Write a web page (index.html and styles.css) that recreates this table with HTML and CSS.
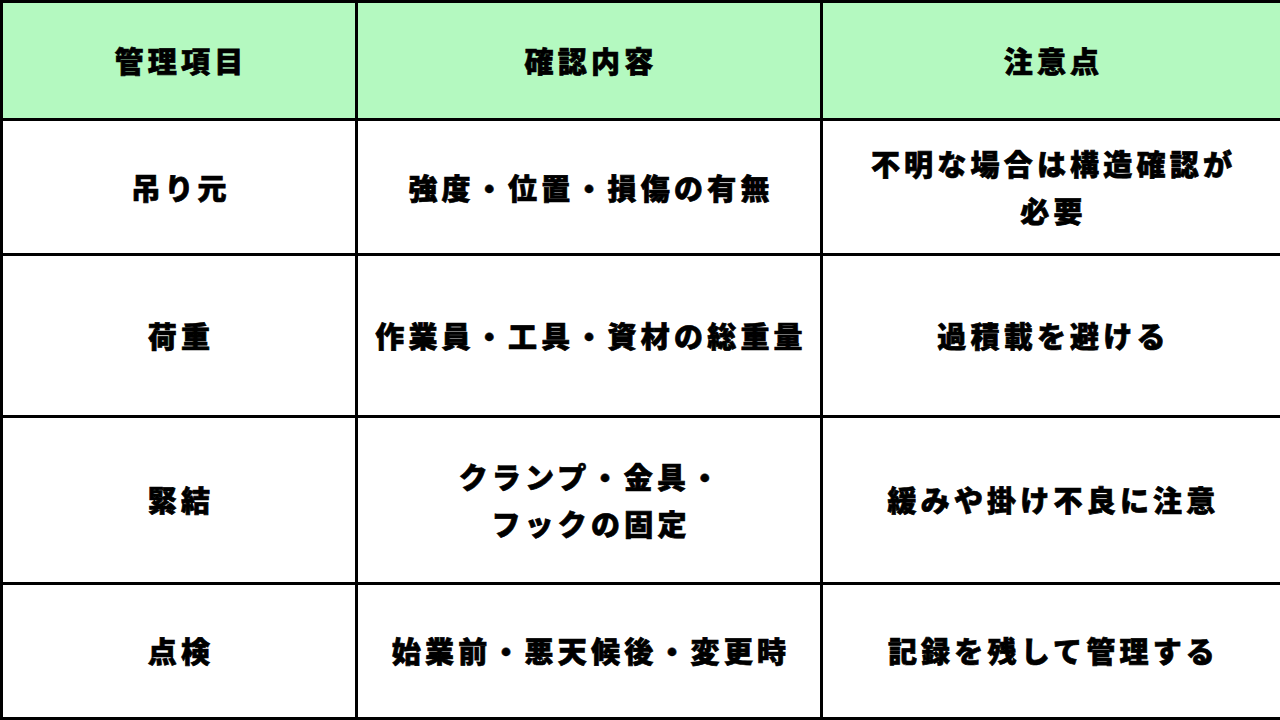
FILE: index.html
```html
<!DOCTYPE html>
<html lang="ja">
<head>
<meta charset="utf-8">
<link rel="stylesheet" href="styles.css">
</head>
<body>
<table class="tbl">
  <colgroup>
    <col class="c1"><col class="c2"><col class="c3">
  </colgroup>
  <thead>
    <tr class="r0"><th>管理項目</th><th>確認内容</th><th>注意点</th></tr>
  </thead>
  <tbody>
    <tr class="r1"><td>吊り元</td><td>強度・位置・損傷の有無</td><td>不明な場合は構造確認が<br>必要</td></tr>
    <tr class="r2"><td>荷重</td><td>作業員・工具・資材の総重量</td><td>過積載を避ける</td></tr>
    <tr class="r3"><td>緊結</td><td>クランプ・金具・<br>フックの固定</td><td>緩みや掛け不良に注意</td></tr>
    <tr class="r4"><td>点検</td><td>始業前・悪天候後・変更時</td><td>記録を残して管理する</td></tr>
  </tbody>
</table>
</body>
</html>
```
FILE: styles.css
```css
html, body {
  margin: 0;
  padding: 0;
  width: 1280px;
  height: 720px;
  overflow: hidden;
  background: #fff;
}
.tbl {
  width: 1280px;
  height: 720px;
  border-collapse: collapse;
  table-layout: fixed;
  font-family: "Noto Sans CJK JP", "Noto Sans", sans-serif;
  font-weight: 900;
  font-size: 29px;
  color: #000;
}
.c1 { width: 355px; }
.c2 { width: 465px; }
.c3 { width: 460px; }
.tbl th, .tbl td {
  border: 3px solid #000;
  text-align: center;
  vertical-align: middle;
  padding: 0 0 0 4px;
  letter-spacing: 4.2px;
  line-height: 47px;
  font-weight: 900;
  -webkit-text-stroke: 0.7px #000;
}
.tbl th { background: #b4f9c0; }
.r0 { height: 118px; }
.r1 { height: 135px; }
.r2 { height: 161px; }
.r3 { height: 166px; }
.r4 { height: 135px; }
```
